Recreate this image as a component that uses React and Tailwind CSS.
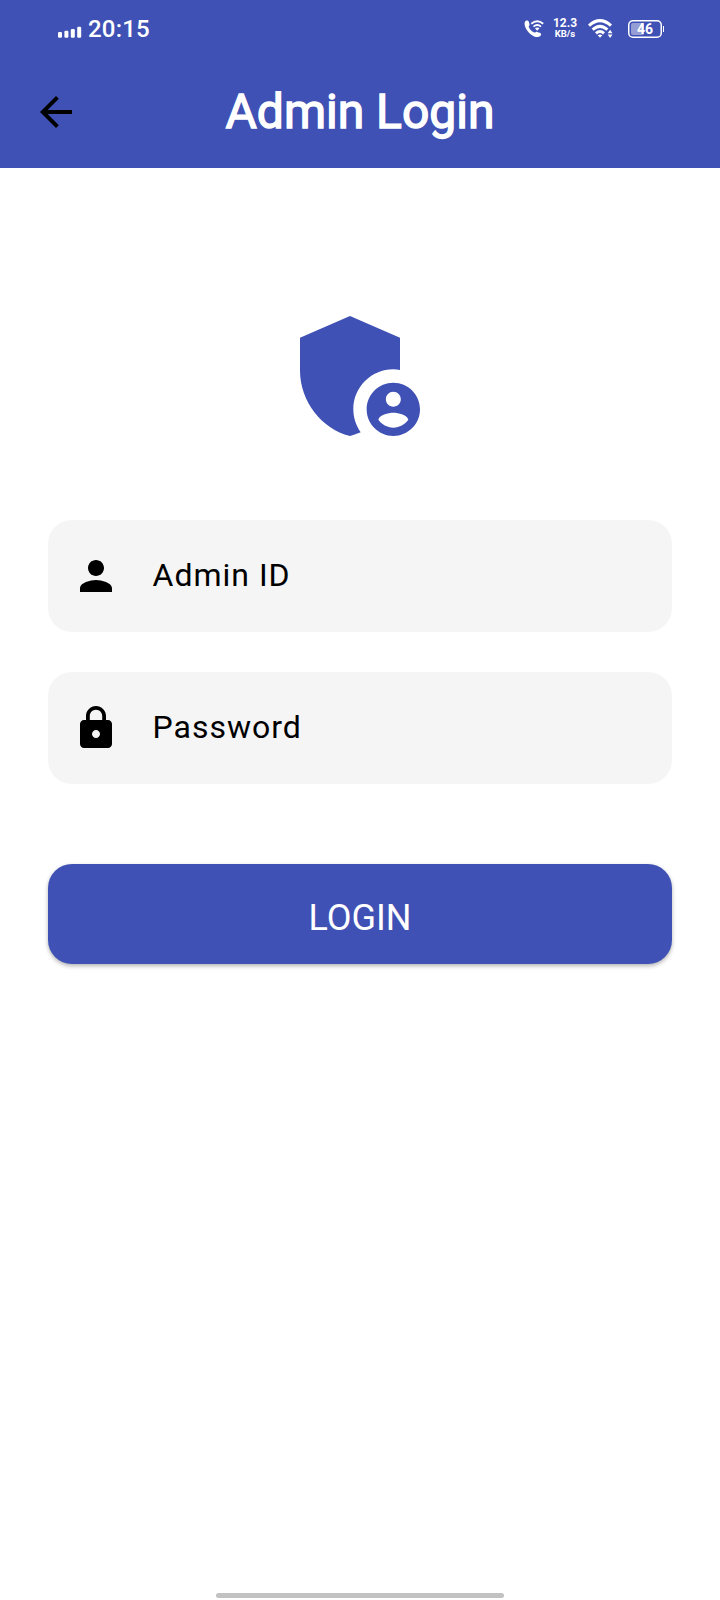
function StatusBar() {
  return (
    <div className="flex h-14 items-center justify-between pr-[56px] pl-[58px] text-white">
      <div className="flex items-center gap-[6px]">
        <svg className="mt-[8px] h-3 w-6" viewBox="0 0 24 12" fill="currentColor">
          <rect x="0" y="6" width="4" height="5.7" rx="1.2" />
          <rect x="6.4" y="4.8" width="4" height="6.9" rx="1.2" />
          <rect x="12.8" y="3" width="4" height="8.7" rx="1.2" />
          <rect x="19.2" y="0.8" width="4" height="10.9" rx="1.2" />
        </svg>
        <span className="mt-[2px] w-[62px] text-[24px] leading-7 font-medium tracking-[0.2px] whitespace-nowrap">20:15</span>
      </div>
      <div className="flex items-center">
        <svg className="mt-px h-5 w-5" viewBox="0 0 20 20" fill="currentColor">
          <path d="M1.2 2.3C2.2 1 4.3 1.2 4.8 2.8L5.5 5.3C5.8 6.3 4.8 7 4.7 7.7C5.2 9.7 8.5 13.2 10.7 13.6C11.5 13.6 12 12.6 13 12.9L15.7 13.8C17.5 14.5 17.4 16.2 16.3 17.1C14.2 18.9 9.6 18.1 5.7 14.4C1.3 10.4-.5 5 1.2 2.3Z" />
          <g fill="none" stroke="currentColor" strokeWidth="1.8">
            <path d="M7.3 4.8Q13.2-.3 19.2 4.8" />
            <path d="M9.5 7.6Q13.2 4.4 17 7.6" />
          </g>
          <path d="M11 9.2Q13.2 7.6 15.5 9.2L13.2 11.8Z" />
        </svg>
        <div className="mb-[2px] ml-[8px] flex w-[26px] flex-col items-center whitespace-nowrap">
          <span className="text-[12px] leading-[12px] font-bold">12.3</span>
          <span className="text-[9.5px] leading-[9px] font-bold">KB/s</span>
        </div>
        <svg className="mt-px ml-[10px] h-5 w-[26px]" viewBox="0 0 26 20" fill="none" stroke="currentColor" strokeWidth="3">
          <path d="M1 6.6Q12-3.4 23 6.6" />
          <path d="M4.6 10.7Q12 4 19.4 10.7" />
          <path d="M8 14.3Q12 10.7 16 14.3" />
          <path d="M9.7 16.2Q12 14.8 14.3 16.2L12 18.8Z" fill="currentColor" stroke="none" />
          <path d="M22.1 10.8L24.5 14.2H19.7ZM22.1 19L24.5 15.6H19.7Z" fill="currentColor" stroke="none" />
        </svg>
        <div className="mt-[2px] ml-[14px] flex items-center">
          <div className="relative h-[18px] w-[34px] rounded-[5px] p-[3px] shadow-[inset_0_0_0_1.5px_#fff]">
            <div className="h-full w-[13px] rounded-[2px] bg-white/45" />
            <span className="absolute inset-0 text-center text-[14px] leading-[18px] font-bold">46</span>
          </div>
          <div className="ml-px h-[6px] w-px bg-white" />
        </div>
      </div>
    </div>
  );
}

function Field({ label, path }) {
  return (
    <label className="flex h-28 items-center rounded-3xl bg-[#f5f5f5] px-6 text-black">
      <svg className="size-12 shrink-0" viewBox="0 0 24 24" fill="currentColor">
        <path d={path} />
      </svg>
      <span className="mb-[2px] ml-[32.5px] text-[32px] leading-10 tracking-[1px]">{label}</span>
    </label>
  );
}

const PERSON =
  "M12 12c2.21 0 4-1.79 4-4s-1.79-4-4-4-4 1.79-4 4 1.79 4 4 4zm0 2c-2.67 0-8 1.34-8 4v2h16v-2c0-2.66-5.33-4-8-4z";
const LOCK =
  "M18 8h-1V6c0-2.76-2.24-5-5-5S7 3.24 7 6v2H6c-1.1 0-2 .9-2 2v10c0 1.1.9 2 2 2h12c1.1 0 2-.9 2-2V10c0-1.1-.9-2-2-2zm-6 9c-1.1 0-2-.9-2-2s.9-2 2-2 2 .9 2 2-.9 2-2 2zm3.1-9H8.9V6c0-1.71 1.39-3.1 3.1-3.1 1.71 0 3.1 1.39 3.1 3.1v2z";

export default function App() {
  return (
    <div className="flex h-[1600px] w-[720px] flex-col bg-white font-[Roboto,sans-serif]">
      <header className="h-[168px] bg-[#3f51b5]">
        <StatusBar />
        <div className="flex h-28 items-center px-8">
          <button aria-label="Back" className="size-12">
            <svg className="size-12" viewBox="0 0 24 24" fill="#000">
              <path d="M20 11H7.83l5.59-5.59L12 4l-8 8 8 8 1.41-1.41L7.83 13H20v-2z" />
            </svg>
          </button>
          <h1 className="mr-12 flex-1 text-center text-[48px] leading-14 font-normal text-white [-webkit-text-stroke:1.4px_white]">Admin Login</h1>
        </div>
      </header>
      <main className="flex flex-1 flex-col px-12 pt-32">
        <svg className="size-40 self-center" viewBox="0 0 24 24" fill="#3f51b5">
          <path d="M17 11c.34 0 .67.04 1 .09V6.27L10.5 3 3 6.27v4.91c0 4.54 3.2 8.79 7.5 9.82.55-.13 1.08-.32 1.6-.55-.69-.98-1.1-2.17-1.1-3.45 0-3.31 2.69-6 6-6z" />
          <path d="M17 13c-2.21 0-4 1.79-4 4s1.79 4 4 4 4-1.79 4-4-1.79-4-4-4zm0 1.38c.62 0 1.12.51 1.12 1.12s-.51 1.12-1.12 1.12-1.12-.51-1.12-1.12.5-1.12 1.12-1.12zm0 5.37c-.93 0-1.74-.46-2.24-1.17.05-.72 1.51-1.08 2.24-1.08s2.19.36 2.24 1.08c-.5.71-1.31 1.17-2.24 1.17z" />
        </svg>
        <div className="mt-16 flex flex-col gap-10">
          <Field label="Admin ID" path={PERSON} />
          <Field label="Password" path={LOCK} />
        </div>
        <button className="mt-20 h-[100px] rounded-3xl bg-[#3f51b5] pt-2 text-[36px] leading-10 text-white shadow-[0_2px_4px_rgba(0,0,0,0.3)]">LOGIN</button>
      </main>
      <div className="mb-[2px] h-[5px] w-72 self-center rounded-full bg-[#c2c2c2]" />
    </div>
  );
}
